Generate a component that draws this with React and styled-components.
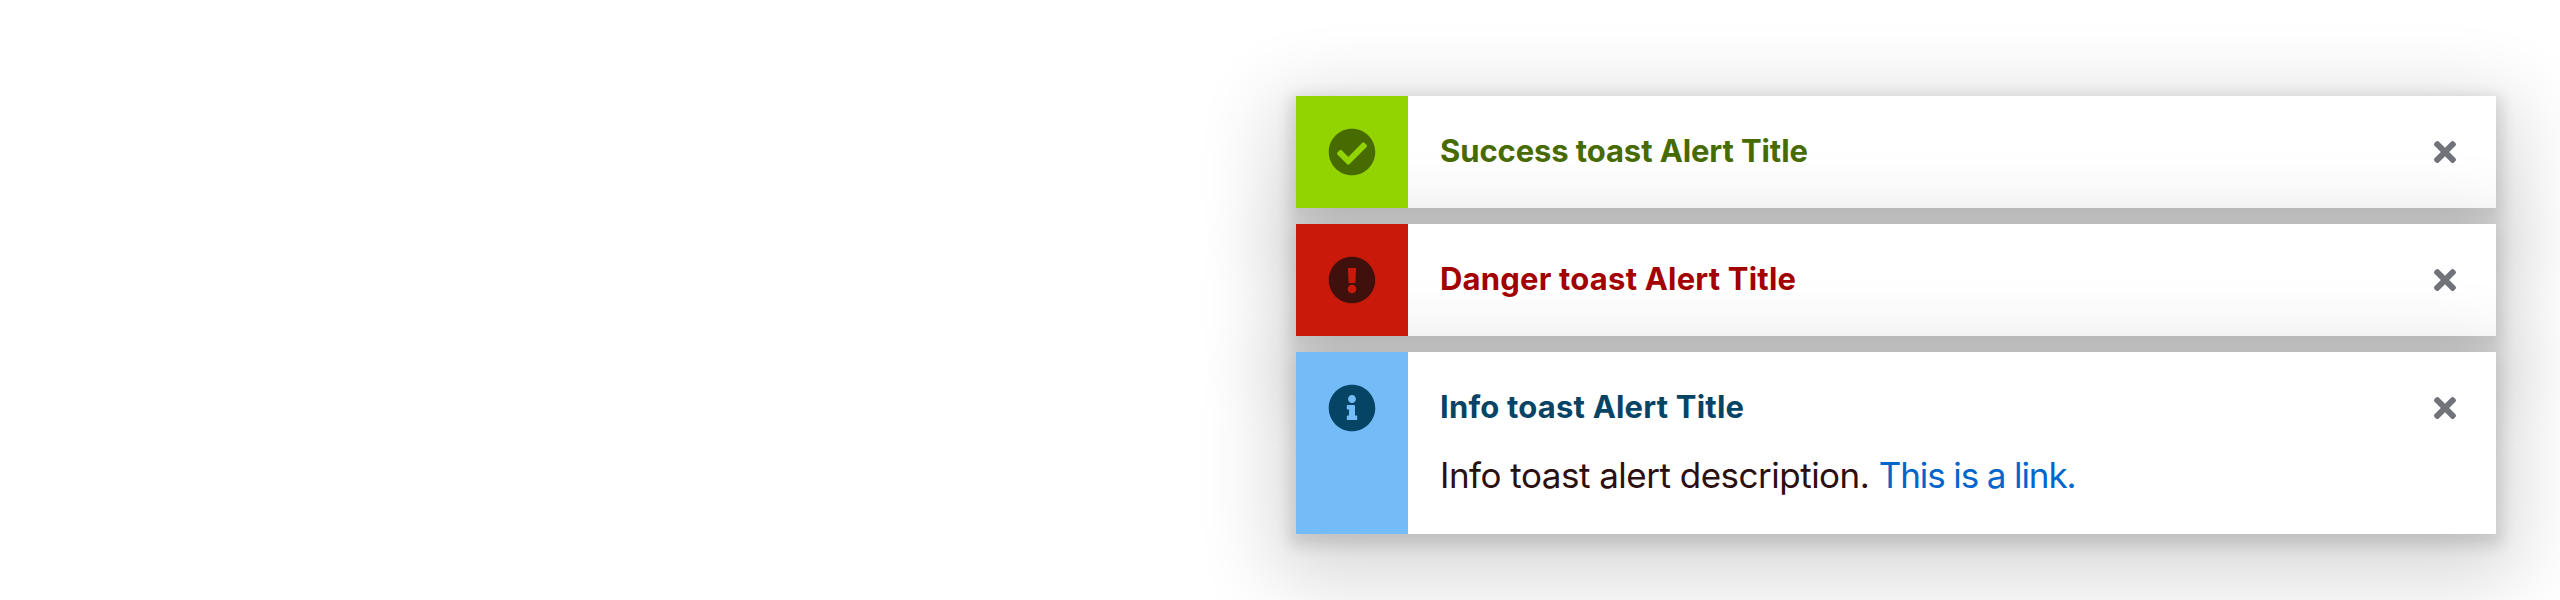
import React from "react";
import styled, { createGlobalStyle } from "styled-components";
import { FaCheckCircle, FaExclamationCircle, FaInfoCircle, FaTimes } from "react-icons/fa";

const GlobalStyle = createGlobalStyle`
  *, *::before, *::after { box-sizing: border-box; }
  body { margin: 0; background: #fff; overflow: hidden; font-family: Inter, "Liberation Sans", sans-serif; }
`;

const Page = styled.main`
  height: 600px;
  padding: 96px 64px 0 0;
  display: flex;
  justify-content: flex-end;
  overflow: hidden;
`;

const ToastGroup = styled.ul`
  width: 1200px;
  margin: 0;
  padding: 0;
  list-style: none;
  display: flex;
  flex-direction: column;
  gap: 16px;
`;

const Toast = styled.li`
  position: relative;
  display: flex;
  align-items: stretch;
  min-height: 112px;
  background: #fff;
  box-shadow: 0 6px 14px 6px rgba(3, 3, 3, 0.12), 0 24px 80px 20px rgba(3, 3, 3, 0.16);
`;

/* Stays above the shadow cast by the following toast. */
const IconPanel = styled.div`
  position: relative;
  z-index: 1;
  flex: none;
  width: 112px;
  padding: 32px;
  background: ${(p) => p.$background};
  color: ${(p) => p.$color};
  font-size: 48px;
  line-height: 0;
`;

const Content = styled.div`
  flex: 1;
  padding: 32px 0 32px 32px;
`;

const Title = styled.h4`
  margin: 0;
  color: ${(p) => p.$color};
  font-size: 31px;
  font-weight: 700;
  line-height: 46px;
  letter-spacing: ${(p) => p.$tracking}px;
  white-space: nowrap;
`;

const Description = styled.p`
  margin: 18px 0 0;
  color: #2c0f0f;
  font-size: 35px;
  line-height: 54px;
  letter-spacing: -0.5px;
  white-space: nowrap;
`;

const Link = styled.a`
  color: #06c;
  letter-spacing: -1.1px;
  text-decoration: none;
`;

const CloseButton = styled.button`
  flex: none;
  align-self: flex-start;
  margin: 40px 40px 0 0;
  padding: 0;
  width: 22px;
  height: 32px;
  border: 0;
  background: none;
  color: #707377;
  display: flex;
  align-items: center;
  justify-content: center;
  svg { flex: none; width: 32px; height: 32px; }
`;

const alerts = [
  { title: "Success toast Alert Title", Icon: FaCheckCircle, background: "#92d400", iconColor: "#486b00", color: "#486b00", tracking: -0.1 },
  { title: "Danger toast Alert Title", Icon: FaExclamationCircle, background: "#c9190b", iconColor: "#40100d", color: "#a30000", tracking: 0.2 },
  {
    title: "Info toast Alert Title",
    Icon: FaInfoCircle,
    background: "#73bcf7",
    iconColor: "#064466",
    color: "#064466",
    tracking: 0.2,
    description: "Info toast alert description.",
    link: "This is a link.",
  },
];

export default function App() {
  return (
    <Page>
      <GlobalStyle />
      <ToastGroup>
        {alerts.map(({ title, Icon, background, iconColor, color, tracking, description, link }) => (
          <Toast key={title}>
            <IconPanel $background={background} $color={iconColor}>
              <Icon />
            </IconPanel>
            <Content>
              <Title $color={color} $tracking={tracking}>{title}</Title>
              {description && (
                <Description>
                  {description} <Link href="#">{link}</Link>
                </Description>
              )}
            </Content>
            <CloseButton aria-label="Close">
              <FaTimes />
            </CloseButton>
          </Toast>
        ))}
      </ToastGroup>
    </Page>
  );
}
